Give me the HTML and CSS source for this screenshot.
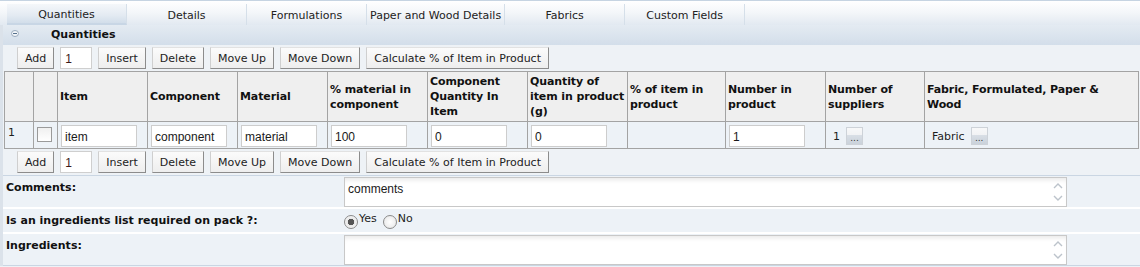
FILE: index.html
```html
<!DOCTYPE html>
<html lang="en">
<head>
    <meta charset="UTF-8">
    <meta name="viewport" content="width=device-width, initial-scale=1.0">
    <title>Quantities</title>
    <link rel="stylesheet" href="styles.css">
</head>
<body>
    <ul class="tabs">
        <li class="tab active">Quantities</li>
        <li class="tab">Details</li>
        <li class="tab">Formulations</li>
        <li class="tab">Paper and Wood Details</li>
        <li class="tab">Fabrics</li>
        <li class="tab">Custom Fields</li>
    </ul>

    <div class="panel">
        <div class="section-head">
            <svg class="collapse" width="8" height="7" viewBox="0 0 8 7">
                <ellipse cx="4" cy="3.5" rx="3.5" ry="3" fill="#f3f6f9" stroke="#9aabbd" stroke-width="1"/>
                <line x1="2" y1="3.5" x2="6" y2="3.5" stroke="#55708c" stroke-width="1"/>
            </svg>
            <span class="section-title">Quantities</span>
        </div>

        <div class="toolbar">
            <button class="btn">Add</button>
            <input class="count" type="text" value="1">
            <button class="btn">Insert</button>
            <button class="btn">Delete</button>
            <button class="btn">Move Up</button>
            <button class="btn">Move Down</button>
            <button class="btn">Calculate % of Item in Product</button>
        </div>

        <table class="grid">
            <colgroup>
                <col style="width: 29px">
                <col style="width: 24px">
                <col style="width: 90px">
                <col style="width: 90px">
                <col style="width: 90px">
                <col style="width: 100px">
                <col style="width: 100px">
                <col style="width: 100px">
                <col style="width: 98px">
                <col style="width: 100px">
                <col style="width: 99px">
                <col style="width: 214px">
            </colgroup>
            <thead>
                <tr>
                    <th></th>
                    <th></th>
                    <th>Item</th>
                    <th>Component</th>
                    <th>Material</th>
                    <th>% material in component</th>
                    <th>Component Quantity In Item</th>
                    <th>Quantity of item in product (g)</th>
                    <th>% of item in product</th>
                    <th>Number in product</th>
                    <th>Number of suppliers</th>
                    <th>Fabric, Formulated, Paper &amp;<br>Wood</th>
                </tr>
            </thead>
            <tbody>
                <tr>
                    <td class="row-num">1</td>
                    <td><input class="check" type="checkbox"></td>
                    <td><input class="cell-input" type="text" value="item"></td>
                    <td><input class="cell-input" type="text" value="component"></td>
                    <td><input class="cell-input" type="text" value="material"></td>
                    <td><input class="cell-input" type="text" value="100"></td>
                    <td><input class="cell-input" type="text" value="0"></td>
                    <td><input class="cell-input" type="text" value="0"></td>
                    <td></td>
                    <td><input class="cell-input" type="text" value="1"></td>
                    <td><span class="picker"><span class="picker-val">1</span><button class="dots">...</button></span></td>
                    <td><span class="picker"><span class="picker-val">Fabric</span><button class="dots">...</button></span></td>
                </tr>
            </tbody>
        </table>

        <div class="toolbar">
            <button class="btn">Add</button>
            <input class="count" type="text" value="1">
            <button class="btn">Insert</button>
            <button class="btn">Delete</button>
            <button class="btn">Move Up</button>
            <button class="btn">Move Down</button>
            <button class="btn">Calculate % of Item in Product</button>
        </div>

        <div class="field first">
            <label class="field-label">Comments:</label>
            <div class="memo">
                <textarea class="memo-text">comments</textarea>
                <span class="spin">
                    <svg width="10" height="8" viewBox="0 0 10 8"><polyline points="1,6 5,2 9,6" fill="none" stroke="#bcc3cb" stroke-width="1.4"/></svg>
                    <svg width="10" height="8" viewBox="0 0 10 8"><polyline points="1,2 5,6 9,2" fill="none" stroke="#bcc3cb" stroke-width="1.4"/></svg>
                </span>
            </div>
        </div>

        <div class="field short">
            <label class="field-label">Is an ingredients list required on pack ?:</label>
            <div class="choices">
                <input class="radio" type="radio" name="pack" checked><span class="choice-text">Yes</span>
                <input class="radio" type="radio" name="pack"><span class="choice-text">No</span>
            </div>
        </div>

        <div class="field last">
            <label class="field-label">Ingredients:</label>
            <div class="memo">
                <textarea class="memo-text"></textarea>
                <span class="spin">
                    <svg width="10" height="8" viewBox="0 0 10 8"><polyline points="1,6 5,2 9,6" fill="none" stroke="#bcc3cb" stroke-width="1.4"/></svg>
                    <svg width="10" height="8" viewBox="0 0 10 8"><polyline points="1,2 5,6 9,2" fill="none" stroke="#bcc3cb" stroke-width="1.4"/></svg>
                </span>
            </div>
        </div>
    </div>
</body>
</html>
```

FILE: styles.css
```css
body {
    margin: 0;
    background: #eef2f6;
    font-family: "DejaVu Sans", Verdana, sans-serif;
    font-size: 11px;
    color: #1e1e1e;
}

/* tab strip */
.tabs {
    display: flex;
    list-style: none;
    margin: 0;
    padding: 3px 0 0 7px;
    height: 21px;
    border-top: 1px solid #c6d4e2;
    background: linear-gradient(#ffffff, #f3f6f9 50%, #e2e9f1);
}

.tab {
    min-width: 120px;
    padding: 0 3px;
    box-sizing: border-box;
    text-align: center;
    line-height: 23px;
    border-right: 1px solid #d5dfe9;
    color: #222;
}

.tab.active {
    background: linear-gradient(#f4f7fa, #e3eaf2 60%, #d2deea);
    border-bottom: 2px solid #c8d6e5;
    line-height: 21px;
}

/* panel */
.panel {
    border-left: 3px solid #dbe2ea;
}

.section-head {
    display: flex;
    align-items: center;
    height: 20px;
    background: linear-gradient(#e4ebf2, #d3deea);
}

.collapse {
    margin-left: 8px;
    margin-bottom: 3px;
}

.section-title {
    margin-left: 32px;
    margin-bottom: 2px;
    font-weight: bold;
    color: #111;
}

.toolbar {
    display: flex;
    align-items: center;
    gap: 6px;
    height: 26px;
    padding-left: 14px;
}

.btn {
    min-width: 36px;
    height: 22px;
    padding: 0 7px;
    font-family: inherit;
    font-size: 11px;
    color: #222;
    background: linear-gradient(#fbfbfb, #eeeeee);
    border: 1px solid;
    border-color: #e2e2e2 #8c8c8c #8c8c8c #cfcfcf;
    cursor: pointer;
}

.count {
    width: 32px;
    height: 22px;
    box-sizing: border-box;
    margin: 0;
    padding: 2px 4px 0;
    border: 1px solid #cfcfcf;
    background: #fff;
    font-family: "Liberation Sans", Arial, sans-serif;
    font-size: 12px;
    color: #3a1a1a;
}

/* grid */
.grid {
    margin-left: 1px;
    width: 1134px;
    table-layout: fixed;
    border-collapse: collapse;
    border: 1px solid #a3a3a3;
}

.grid th {
    height: 49px;
    padding: 0 1px 0 2px;
    background: #efefef;
    border: 1px solid #a3a3a3;
    font-weight: bold;
    text-align: left;
    line-height: 15px;
    letter-spacing: -0.1px;
    vertical-align: middle;
    color: #111;
}

.grid td {
    padding: 3px 3px 1px;
    background: #edf2f7;
    border: 1px solid #a3a3a3;
    vertical-align: top;
}

.row-num {
    line-height: 15px;
}

.check {
    appearance: none;
    display: block;
    width: 15px;
    height: 15px;
    margin: 2px 0 0 0;
    border: 1px solid #9a9a9a;
    background: linear-gradient(#f0f0f0, #ffffff);
}

.cell-input {
    display: block;
    width: 76px;
    height: 22px;
    box-sizing: border-box;
    margin: 0;
    padding: 2px 3px 0;
    border: 1px solid #cdcdcd;
    background: #fff;
    font-family: "Liberation Sans", Arial, sans-serif;
    font-size: 12px;
    color: #1a1a1a;
}

.picker {
    display: flex;
    align-items: center;
    gap: 6px;
    padding: 2px 0 0 4px;
}

.dots {
    width: 17px;
    height: 18px;
    padding: 0 0 1px;
    border: 1px solid #cdd2d8;
    background: linear-gradient(#f7f8f9 0, #f1f2f4 45%, #d8dee5 46%, #cad2db);
    font-family: inherit;
    font-size: 9px;
    line-height: 9px;
    color: #333;
    display: flex;
    align-items: flex-end;
    justify-content: center;
}

/* form fields */
.field {
    display: flex;
    height: 31px;
    border-top: 2px solid #ffffff;
    background: #edf2f7;
}

.field.first {
    border-top: 1px solid #cad6e3;
}

.field.short {
    height: 23px;
}

.field.last {
    border-bottom: 1px solid #cad6e3;
}

.field-label {
    width: 338px;
    padding: 5px 0 0 3px;
    font-weight: bold;
    color: #111;
}

.memo {
    display: flex;
    width: 723px;
    height: 30px;
    box-sizing: border-box;
    margin-top: 1px;
    border: 1px solid #c8c8c8;
    background: #fff;
    box-shadow: inset 0 5px 5px -3px #e8e8e8;
}

.memo-text {
    flex: 1;
    border: none;
    background: transparent;
    resize: none;
    padding: 4px 3px 0;
    font-family: "Liberation Sans", Arial, sans-serif;
    font-size: 12px;
    color: #1a1a1a;
    overflow: hidden;
}

.spin {
    display: flex;
    flex-direction: column;
    justify-content: space-around;
    padding: 2px 3px 2px 0;
}

.choices {
    display: flex;
    align-items: flex-start;
    padding-top: 4px;
}

.radio {
    appearance: none;
    width: 14px;
    height: 14px;
    margin: 2px 1px 0 0;
    border: 1px solid #8a8a8a;
    border-radius: 50%;
    background: radial-gradient(#ffffff, #e4e4e4);
}

.radio:checked {
    background: radial-gradient(#555 0 3px, #e8e8e8 3.5px, #ffffff);
}

.choice-text {
    margin-right: 6px;
    line-height: 11px;
}
```
